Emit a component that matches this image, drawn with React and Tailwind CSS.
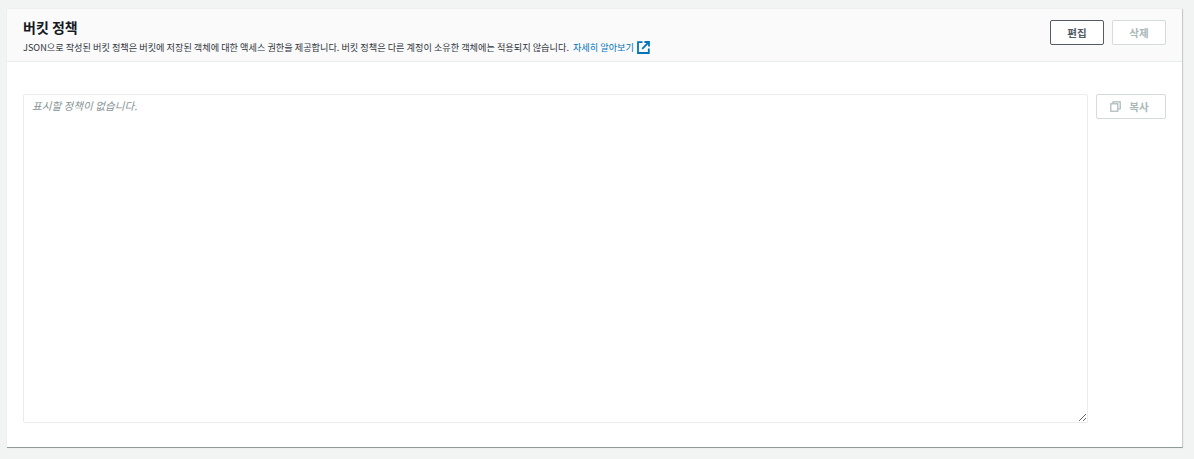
const kr = "font-['Noto_Sans_CJK_KR','Noto_Sans',sans-serif]";

function ExternalIcon() {
  return (
    <svg width="13" height="13" viewBox="0 0 13 13" fill="none" stroke="#0073bb" strokeWidth="1.8" className="ml-[3px] shrink-0">
      <path d="M5.5 1.2H1v10.8h10.8V7.5" />
      <path d="M5.2 7.8 11.6 1.4M7.4 1h4.6v4.6" />
    </svg>
  );
}

function CopyIcon() {
  return (
    <svg width="11" height="11" viewBox="0 0 11 11" fill="none" stroke="#aab7b8" strokeWidth="1.2">
      <path d="M3 2.5V.8h7.2V8H8" />
      <rect x=".8" y="2.8" width="7" height="7.4" />
    </svg>
  );
}

export default function App() {
  return (
    <div className={`h-[459px] bg-[#f2f3f3] pt-[9px] pl-[7px] pr-[11px] ${kr}`}>
      <div className="h-[439px] bg-white border-r border-b border-r-[#c5cccc] border-b-[#8f9a9a] shadow-[0_0_1px_#d5dbdb]">
        <div className="h-[53px] flex justify-between bg-[#fafafa] border-b border-[#eaeded] pl-[16px] pr-[16px] pt-[8px]">
          <div>
            <h2 className="text-[14px] leading-[20px] font-bold text-[#16191f]">버킷 정책</h2>
            <p className="mt-[3px] flex items-center text-[9.17px] leading-[14px] text-[#2f343b]">
              JSON으로 작성된 버킷 정책은 버킷에 저장된 객체에 대한 액세스 권한을 제공합니다. 버킷 정책은 다른 계정이 소유한 객체에는 적용되지 않습니다.
              <a className="ml-[4px] text-[#0073bb]">자세히 알아보기</a>
              <ExternalIcon />
            </p>
          </div>
          <div className="flex gap-[8px] pt-[3px]">
            <button className="w-[54px] h-[25px] bg-white border border-[#545b64] rounded-[2px] text-[10.5px] font-bold text-[#545b64]">편집</button>
            <button className="w-[54px] h-[25px] bg-white border border-[#d5dbdb] rounded-[2px] text-[10.5px] font-bold text-[#aab7b8]">삭제</button>
          </div>
        </div>
        <div className="flex pl-[16px] pr-[16px] pt-[32px] gap-[8px]">
          <textarea
            readOnly
            placeholder="표시할 정책이 없습니다."
            className="w-[1065px] h-[329px] block border border-[#eaeded] rounded-[2px] bg-white px-[8px] py-[3px] text-[10.6px] leading-[16px] italic placeholder:text-[#879596] outline-none resize-y"
          />
          <button className="w-[70px] h-[25px] flex items-center justify-center gap-[8px] bg-white border border-[#d5dbdb] rounded-[2px] pr-[3px] text-[10.5px] font-bold text-[#aab7b8]">
            <CopyIcon />
            복사
          </button>
        </div>
      </div>
    </div>
  );
}
